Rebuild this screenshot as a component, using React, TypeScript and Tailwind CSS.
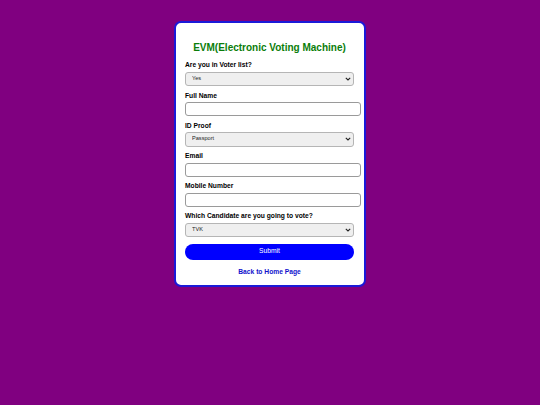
import React from "react";

function Chevron() {
  return (
    <svg
      className="pointer-events-none absolute right-[3px] top-1/2 -translate-y-1/2"
      width="6"
      height="4"
      viewBox="0 0 6 4"
    >
      <path d="M0.8 0.8 L3 3 L5.2 0.8" fill="none" stroke="#222" strokeWidth="1.1" />
    </svg>
  );
}

function SelectField({ label, value, options }: { label: string; value: string; options: string[] }) {
  return (
    <div className="flex flex-col">
      <label className="block text-[6.7px] leading-[8px] font-bold text-black mb-[2.5px]">{label}</label>
      <div className="relative w-[169px] h-[14.5px] leading-none">
        <select
          defaultValue={value}
          className="block appearance-none w-full h-full rounded-[3px] border border-[#b5b5b5] bg-[#efefef] pl-[6px] text-[5.6px] leading-none text-[#222] outline-none"
        >
          {options.map((o) => (
            <option key={o}>{o}</option>
          ))}
        </select>
        <Chevron />
      </div>
    </div>
  );
}

function InputField({ label }: { label: string }) {
  return (
    <div className="flex flex-col">
      <label className="block text-[6.7px] leading-[8px] font-bold text-black mb-[2.5px]">{label}</label>
      <input
        type="text"
        className="block w-[176px] h-[14px] rounded-[3px] border border-[#9a9a9a] bg-white outline-none"
      />
    </div>
  );
}

export default function App() {
  return (
    <div
      className="w-[540px] h-[405px] bg-[#800080] flex justify-center"
      style={{ fontFamily: '"Liberation Sans", Arial, sans-serif' }}
    >
      <div className="mt-[21px] w-[192px] h-[266px] bg-white border-2 border-[#1a1ad8] rounded-[7px] pl-[9px] pr-[10px] pt-[19px] flex flex-col">
        <h1 className="text-[10px] leading-[12px] font-bold text-[#0a7d0a] text-center mb-[7px] whitespace-nowrap">
          EVM(Electronic Voting Machine)
        </h1>
        <form className="flex flex-col gap-[5.5px]" onSubmit={(e) => e.preventDefault()}>
          <SelectField label="Are you in Voter list?" value="Yes" options={["Yes", "No"]} />
          <InputField label="Full Name" />
          <SelectField label="ID Proof" value="Passport" options={["Passport", "Aadhar", "Voter ID"]} />
          <InputField label="Email" />
          <InputField label="Mobile Number" />
          <SelectField label="Which Candidate are you going to vote?" value="TVK" options={["TVK", "DMK", "ADMK"]} />
          <button
            type="submit"
            className="mt-[1px] block w-[169px] h-[16.5px] rounded-full bg-[#0000ff] text-white text-[6.7px] leading-none"
          >
            Submit
          </button>
        </form>
        <a href="#" className="mt-[7.5px] text-center text-[6.7px] leading-[8px] font-bold text-[#1010cc] w-[169px] block">
          Back to Home Page
        </a>
      </div>
    </div>
  );
}
